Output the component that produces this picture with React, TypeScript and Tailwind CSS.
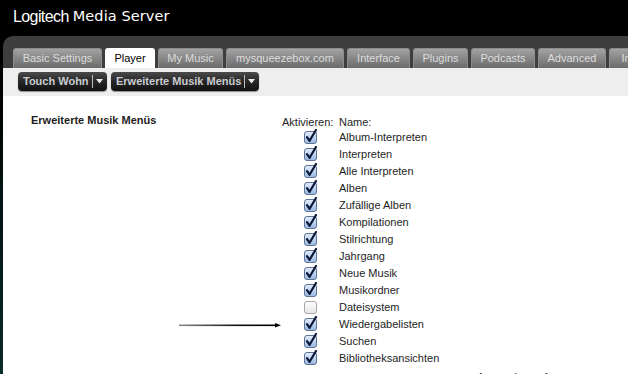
import React from "react";

const tabs = [
  { label: "Basic Settings", w: "w-[89px]" },
  { label: "Player", w: "w-[50px]", active: true },
  { label: "My Music", w: "w-[65px]" },
  { label: "mysqueezebox.com", w: "w-[118px]" },
  { label: "Interface", w: "w-[63px]" },
  { label: "Plugins", w: "w-[55px]" },
  { label: "Podcasts", w: "w-[64px]" },
  { label: "Advanced", w: "w-[68px]" },
  { label: "Information", w: "w-[80px]" },
];

const menus = [
  { name: "Album-Interpreten", on: true },
  { name: "Interpreten", on: true },
  { name: "Alle Interpreten", on: true },
  { name: "Alben", on: true },
  { name: "Zufällige Alben", on: true },
  { name: "Kompilationen", on: true },
  { name: "Stilrichtung", on: true },
  { name: "Jahrgang", on: true },
  { name: "Neue Musik", on: true },
  { name: "Musikordner", on: true },
  { name: "Dateisystem", on: false },
  { name: "Wiedergabelisten", on: true },
  { name: "Suchen", on: true },
  { name: "Bibliotheksansichten", on: true },
];

function Check({ on }: { on: boolean }) {
  return (
    <svg width="14" height="15" viewBox="0 0 14 15">
      <defs>
        <linearGradient id="cb-on" x1="0" y1="0" x2="0" y2="1">
          <stop offset="0" stopColor="#e4eefb" />
          <stop offset="1" stopColor="#97b7e3" />
        </linearGradient>
        <linearGradient id="cb-off" x1="0" y1="0" x2="0" y2="1">
          <stop offset="0" stopColor="#ffffff" />
          <stop offset="1" stopColor="#e6e6e6" />
        </linearGradient>
      </defs>
      <rect
        x="0.5"
        y="2.5"
        width="12"
        height="12"
        rx="2.5"
        fill={on ? "url(#cb-on)" : "url(#cb-off)"}
        stroke={on ? "#5f7392" : "#a8a8a8"}
      />
      {on && (
        <path d="M3 8.2 L5.6 11.8 L12 1" fill="none" stroke="#0b1736" strokeWidth="2.2" strokeLinecap="round" strokeLinejoin="round" />
      )}
    </svg>
  );
}

function MenuButton({ label, w }: { label: string; w: string }) {
  return (
    <div className={`${w} h-[19px] flex items-center justify-between rounded-[4px] bg-gradient-to-b from-[#4b4b4b] via-[#262626] to-[#111111] pl-[5px] pr-[4px] shadow-[0_1px_1px_rgba(0,0,0,0.4)]`}>
      <span className="text-[11px] font-bold text-[#c9cbd0] leading-none">{label}</span>
      <span className="flex items-center gap-[3px]">
        <span className="w-px h-[13px] bg-[#bfbfbf]" />
        <svg width="7" height="5" viewBox="0 0 7 5">
          <path d="M0 0 H7 L3.5 4.5 Z" fill="#e8e8e8" />
        </svg>
      </span>
    </div>
  );
}

export default function App() {
  return (
    <div className="w-[628px] h-[374px] overflow-hidden bg-gradient-to-b from-black via-[#031212] to-[#0a2a2a] font-['Liberation_Sans',Arial,sans-serif] flex flex-col">
      {/* Kopfzeile */}
      <div className="h-[36px] shrink-0 flex items-center pl-[13px] pb-[2px] text-white">
        <span className="text-[16px] tracking-[-0.6px]">Logitech</span>
        <span className="ml-[4px] text-[14.5px] font-['DejaVu_Sans',sans-serif] tracking-[0.1px]">Media Server</span>
      </div>

      <div className="flex-1 ml-[3px] rounded-tl-[10px] bg-[#3e3e3e] flex flex-col overflow-hidden">
        {/* Reiter */}
        <div className="h-[32px] shrink-0 flex items-end pl-[10px] gap-[3px]">
          {tabs.map((t) => (
            <div
              key={t.label}
              className={`${t.w} shrink-0 h-[20px] flex items-center justify-center rounded-t-[3px] text-[11px] ${
                t.active
                  ? "bg-white text-black"
                  : "bg-gradient-to-b from-[#a3a3a3] to-[#6b6b6b] text-[#dcdcdc] border-t border-x border-[#8c8c8c]"
              }`}
            >
              {t.label}
            </div>
          ))}
        </div>

        {/* Spielerleiste */}
        <div className="h-[28px] shrink-0 bg-[#eeeeee] flex items-start pt-[4px] pl-[15px] gap-[4px]">
          <MenuButton label="Touch Wohn" w="w-[89px]" />
          <MenuButton label="Erweiterte Musik Menüs" w="w-[148px]" />
        </div>

        {/* Inhalt */}
        <div className="flex-1 bg-white relative text-[11px] text-[#1e1e1e]">
          <div className="flex pt-[19px]">
            <div className="w-[279px] pl-[28px] font-bold leading-[14px] -mt-[2px]">Erweiterte Musik Menüs</div>
            <div className="flex flex-col">
              <div className="grid grid-cols-[57px_1fr] leading-[14px]">
                <div>Aktivieren:</div>
                <div>Name:</div>
              </div>
              {menus.map((m) => (
                <div key={m.name} className="grid grid-cols-[57px_1fr] h-[17px] items-center">
                  <div className="flex justify-center -mt-[2px] pl-[1px]">
                    <Check on={m.on} />
                  </div>
                  <div>{m.name}</div>
                </div>
              ))}
              <div className="pl-[195px] mt-[3px] leading-[14px]">Anwenden auf:</div>
            </div>
          </div>

          {/* Pfeil */}
          <svg className="absolute left-[176px] top-[226px]" width="102" height="7" viewBox="0 0 102 7">
            <defs>
              <linearGradient id="arrow" x1="0" y1="0" x2="1" y2="0">
                <stop offset="0" stopColor="#8a8a8a" />
                <stop offset="0.6" stopColor="#111" />
                <stop offset="1" stopColor="#000" />
              </linearGradient>
            </defs>
            <rect x="0" y="2.5" width="97" height="1.6" fill="url(#arrow)" />
            <path d="M96 1 L102 3.3 L96 5.6 Z" fill="#000" />
          </svg>
        </div>
      </div>
    </div>
  );
}
